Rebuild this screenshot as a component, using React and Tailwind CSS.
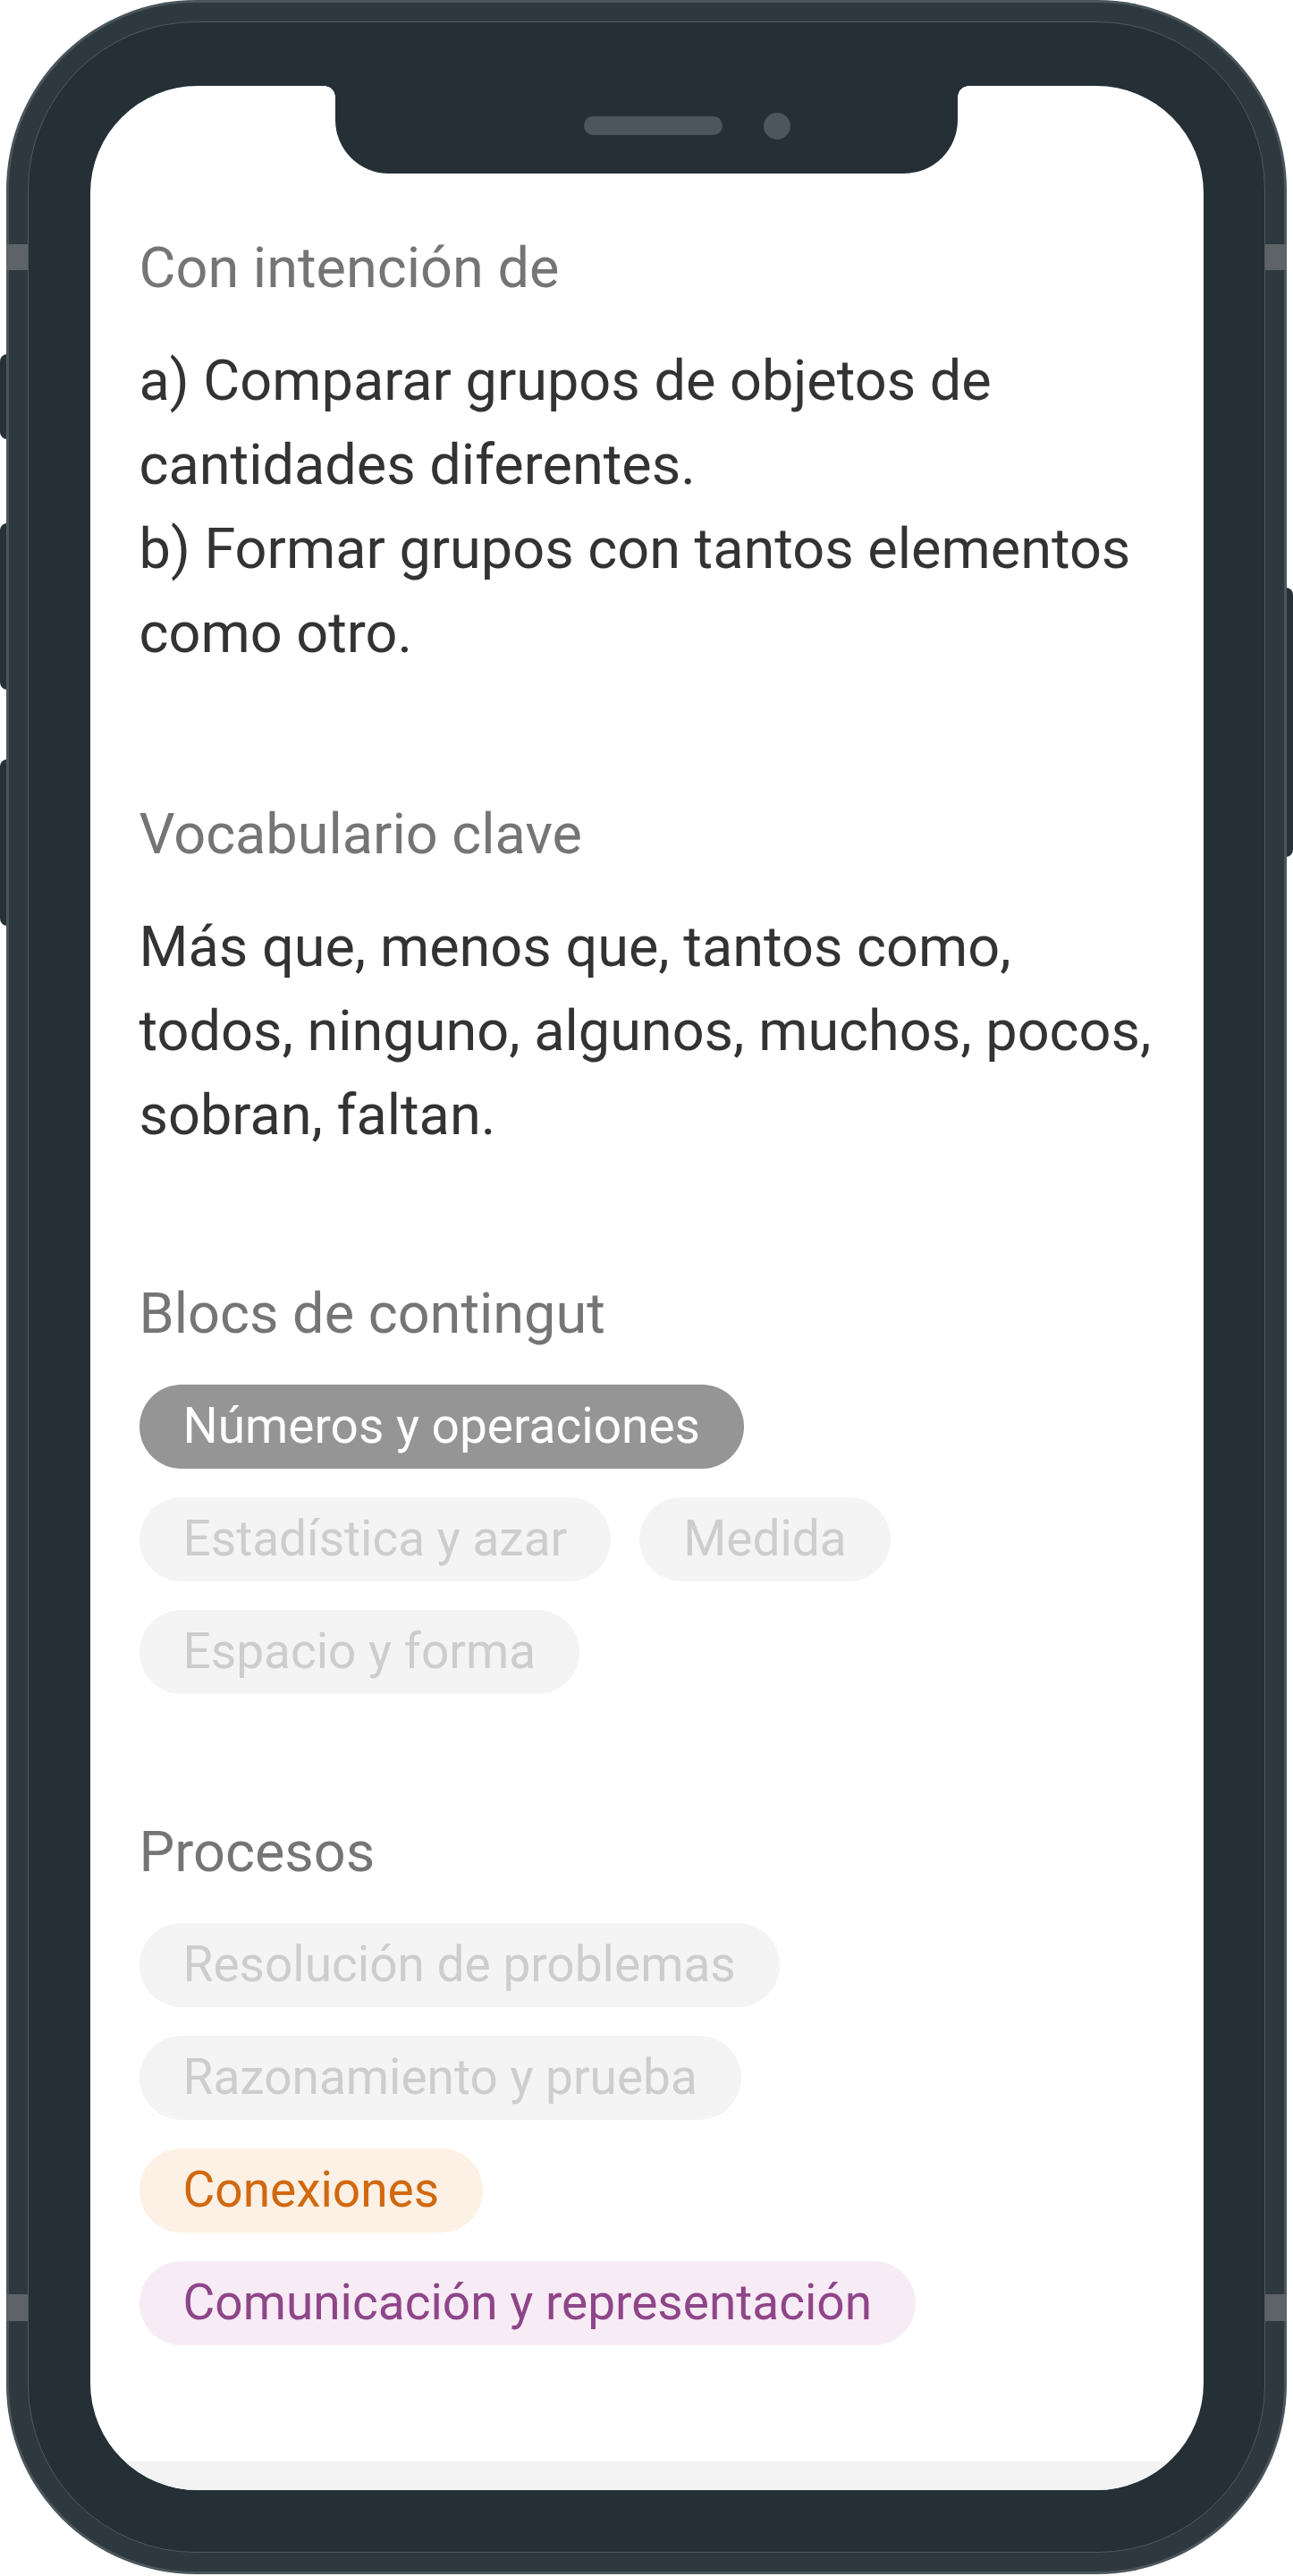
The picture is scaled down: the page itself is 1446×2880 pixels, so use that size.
import React from "react";

const chip = "h-[94px] px-[49px] rounded-full flex items-center text-[55px] leading-none whitespace-nowrap";
const off = "bg-[#f4f4f4] text-[#cdcdcd]";

const Heading = ({ children }) => (
    <h2 className="text-[63px] leading-[94px] text-[#757575] font-normal mb-[32px]">{children}</h2>
);

const App = () => {
    return (
        <div className="relative w-[1446px] h-[2880px] bg-white font-[Roboto,sans-serif] overflow-hidden">
            {/* side buttons */}
            <div className="absolute left-0 top-[396px] w-[14px] h-[95px] rounded-l-[8px] bg-[#263138]" />
            <div className="absolute left-0 top-[585px] w-[14px] h-[186px] rounded-l-[8px] bg-[#263138]" />
            <div className="absolute left-0 top-[849px] w-[14px] h-[186px] rounded-l-[8px] bg-[#263138]" />
            <div className="absolute right-0 top-[657px] w-[14px] h-[301px] rounded-r-[8px] bg-[#263138]" />

            {/* phone body */}
            <div className="relative ml-[7px] w-[1432px] h-[2878px] rounded-[212px] bg-[#4a555c] p-[3px]">
                <div className="w-full h-full rounded-[209px] bg-[#2e393f] p-[21px]">
                    <div className="w-full h-full rounded-[188px] border-[1.5px] border-[#4e5a61] bg-[#242f36] pl-[68.5px] pr-[68.5px] pt-[70.5px] pb-[69.5px]">
                        {/* screen */}
                        <div className="relative w-full h-full rounded-[120px] bg-white overflow-hidden flex flex-col">
                            {/* notch */}
                            <div className="absolute left-[274px] top-0 w-[696px] h-[98px] rounded-b-[60px] bg-[#242f36] flex items-center pl-[278px] pb-[8px]">
                                <div className="absolute -left-[12px] top-0 w-[12px] h-[12px] bg-[radial-gradient(circle_at_0_100%,transparent_11.5px,#242f36_12px)]" />
                                <div className="absolute -right-[12px] top-0 w-[12px] h-[12px] bg-[radial-gradient(circle_at_100%_100%,transparent_11.5px,#242f36_12px)]" />
                                <div className="w-[155px] h-[21px] rounded-full bg-[#4b575d]" />
                                <div className="ml-[46px] w-[30px] h-[30px] rounded-full bg-[#4b575d]" />
                            </div>

                            <div className="pl-[55px] pr-[30px] pt-[157px]">
                                <section>
                                    <Heading>Con intención de</Heading>
                                    <p className="text-[63px] leading-[94px] text-[#333333] whitespace-nowrap">
                                        a) Comparar grupos de objetos de<br />
                                        cantidades diferentes.<br />
                                        b) Formar grupos con tantos elementos<br />
                                        como otro.
                                    </p>
                                </section>

                                <section className="mt-[131px]">
                                    <Heading>Vocabulario clave</Heading>
                                    <p className="text-[63px] leading-[94px] text-[#333333] whitespace-nowrap">
                                        Más que, menos que, tantos como,<br />
                                        todos, ninguno, algunos, muchos, pocos,<br />
                                        sobran, faltan.
                                    </p>
                                </section>

                                <section className="mt-[128px]">
                                    <Heading>Blocs de contingut</Heading>
                                    <div className="flex flex-wrap gap-[32px] w-[1134px]">
                                        <span className={`${chip} bg-[#959595] text-white`}>Números y operaciones</span>
                                        <span className={`${chip} ${off}`}>Estadística y azar</span>
                                        <span className={`${chip} ${off}`}>Medida</span>
                                        <span className={`${chip} ${off}`}>Espacio y forma</span>
                                    </div>
                                </section>

                                <section className="mt-[130px]">
                                    <Heading>Procesos</Heading>
                                    <div className="flex flex-col items-start gap-[32px]">
                                        <span className={`${chip} ${off}`}>Resolución de problemas</span>
                                        <span className={`${chip} ${off}`}>Razonamiento y prueba</span>
                                        <span className={`${chip} bg-[#fdf0e4] text-[#d0690f]`}>Conexiones</span>
                                        <span className={`${chip} bg-[#f7ecf5] text-[#8f4589]`}>Comunicación y representación</span>
                                    </div>
                                </section>
                            </div>

                            {/* bottom bar */}
                            <div className="mt-auto h-[32px] bg-[#f3f3f3] shrink-0" />
                        </div>
                    </div>
                </div>

                {/* antenna bands */}
                <div className="absolute left-0 top-[273px] w-[24px] h-[29px] bg-[#5d6367]" />
                <div className="absolute right-0 top-[273px] w-[24px] h-[29px] bg-[#5d6367]" />
                <div className="absolute left-0 top-[2565px] w-[24px] h-[30px] bg-[#5d6367]" />
                <div className="absolute right-0 top-[2565px] w-[24px] h-[30px] bg-[#5d6367]" />
            </div>
        </div>
    );
};

export default App;
